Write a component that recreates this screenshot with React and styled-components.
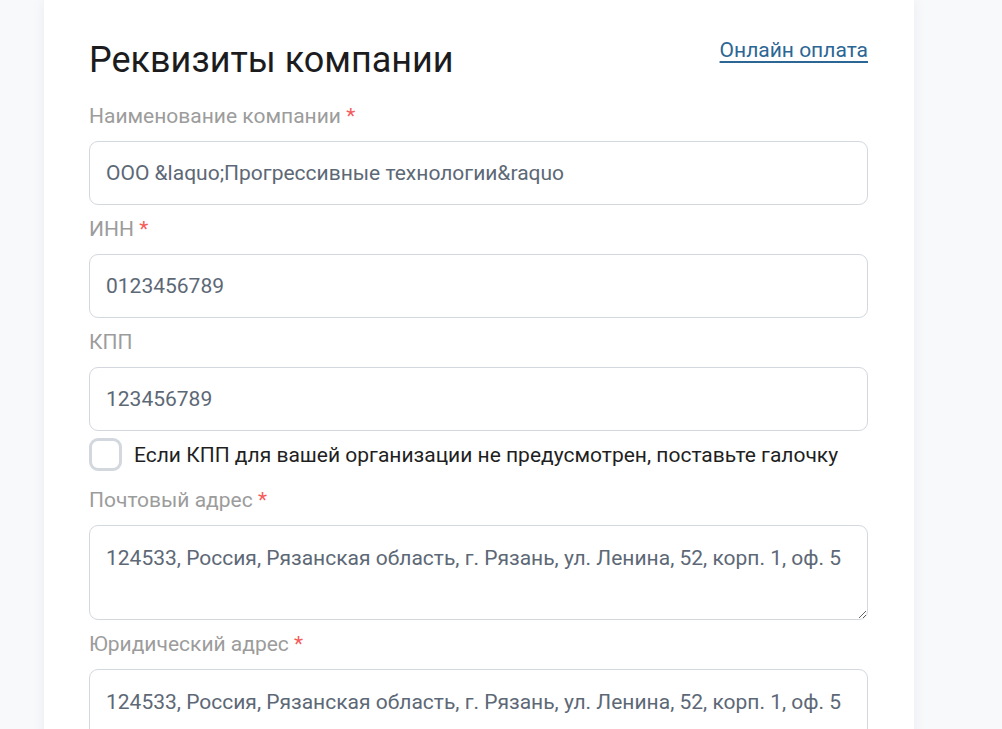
import React from "react";
import styled, { createGlobalStyle } from "styled-components";

const Global = createGlobalStyle`
  html, body { margin: 0; padding: 0; background: #f8f9fb; }
  body { font-family: Roboto, "Noto Sans", Arial, sans-serif; overflow: hidden; }
  * { box-sizing: border-box; }
`;

const Page = styled.div`
  display: flex;
  padding-left: 44px;
  min-height: 729px;
`;

const Card = styled.section`
  width: 870px;
  background: #fff;
  box-shadow: 0 0 14px rgba(20, 30, 60, 0.06);
  padding: 36px 46px 40px 45px;
  min-height: 729px;
`;

const Header = styled.div`
  display: flex;
  justify-content: space-between;
  align-items: flex-start;
  margin-bottom: 19px;
`;

const Title = styled.h1`
  margin: 0;
  font-size: 36px;
  line-height: 48px;
  font-weight: 400;
  color: #1c1c1e;
`;

const Link = styled.a`
  margin-top: 1px;
  font-size: 21px;
  line-height: 26px;
  color: #2c6694;
  text-decoration: underline;
  text-underline-offset: 4px;
  text-decoration-thickness: 1.5px;
`;

const Field = styled.div`
  display: flex;
  flex-direction: column;
  margin-bottom: 11px;
`;

const Label = styled.label`
  font-size: 21px;
  line-height: 26px;
  color: #9c9c9c;
  margin-bottom: 12px;
`;

const Star = styled.span`
  color: #f45b5b;
`;

const Input = styled.input`
  height: 64px;
  width: 100%;
  border: 1px solid #d3d7de;
  border-radius: 9px;
  padding: 0 16px;
  font-family: inherit;
  font-size: 21px;
  color: #5d6876;
  background: #fff;
  outline: none;
`;

const Textarea = styled.textarea`
  height: ${(p) => p.$h}px;
  width: 100%;
  border: 1px solid #d3d7de;
  border-radius: 9px;
  padding: 19px 16px;
  font-family: inherit;
  font-size: 21px;
  line-height: 26px;
  color: #5d6876;
  background: #fff;
  outline: none;
  resize: vertical;
  display: block;
`;

const CheckRow = styled.label`
  display: flex;
  align-items: center;
  gap: 12px;
  margin-top: -4px;
  margin-bottom: 16px;
  font-size: 21px;
  color: #1f1f1f;
`;

const Box = styled.span`
  width: 33px;
  height: 33px;
  border: 3px solid #d3d7de;
  border-radius: 9px;
  flex: none;
`;

const ADDRESS = "124533, Россия, Рязанская область, г. Рязань, ул. Ленина, 52, корп. 1, оф. 5";

export default function App() {
  return (
    <>
      <Global />
      <Page>
        <Card>
          <Header>
            <Title>Реквизиты компании</Title>
            <Link href="#">Онлайн оплата</Link>
          </Header>
          <Field>
            <Label>
              Наименование компании <Star>*</Star>
            </Label>
            <Input readOnly value={"ООО &laquo;Прогрессивные технологии&raquo"} />
          </Field>
          <Field>
            <Label>
              ИНН <Star>*</Star>
            </Label>
            <Input readOnly value="0123456789" />
          </Field>
          <Field>
            <Label>КПП</Label>
            <Input readOnly value="123456789" />
          </Field>
          <CheckRow>
            <Box />
            Если КПП для вашей организации не предусмотрен, поставьте галочку
          </CheckRow>
          <Field>
            <Label>
              Почтовый адрес <Star>*</Star>
            </Label>
            <Textarea $h={95} readOnly value={ADDRESS} />
          </Field>
          <Field>
            <Label>
              Юридический адрес <Star>*</Star>
            </Label>
            <Textarea $h={95} readOnly value={ADDRESS} />
          </Field>
        </Card>
      </Page>
    </>
  );
}
